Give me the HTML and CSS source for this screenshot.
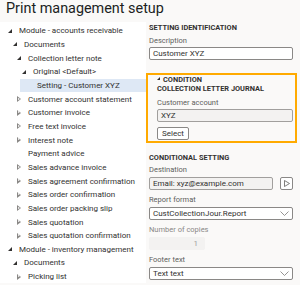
FILE: index.html
```html
<!DOCTYPE html>
<html lang="en">
<head>
<title>Print management setup</title>
<link rel="stylesheet" href="styles.css">
</head>
<body>
<h1 class="title">Print management setup</h1>
<div class="layout">
	<div class="tree">
		<div class="row l0"><span class="exp"></span>Module - accounts receivable</div>
		<div class="row l1"><span class="exp"></span>Documents</div>
		<div class="row l2"><span class="exp"></span>Collection letter note</div>
		<div class="row l3"><span class="exp"></span>Original &lt;Default&gt;</div>
		<div class="row selected">Setting - Customer XYZ</div>
		<div class="row l2"><span class="col"></span>Customer account statement</div>
		<div class="row l2"><span class="col"></span>Customer invoice</div>
		<div class="row l2"><span class="col"></span>Free text invoice</div>
		<div class="row l2"><span class="col"></span>Interest note</div>
		<div class="row l2"><span class="leaf"></span>Payment advice</div>
		<div class="row l2"><span class="col"></span>Sales advance invoice</div>
		<div class="row l2"><span class="col"></span>Sales agreement confirmation</div>
		<div class="row l2"><span class="col"></span>Sales order confirmation</div>
		<div class="row l2"><span class="col"></span>Sales order packing slip</div>
		<div class="row l2"><span class="col"></span>Sales quotation</div>
		<div class="row l2"><span class="col"></span>Sales quotation confirmation</div>
		<div class="row l0"><span class="exp"></span>Module - inventory management</div>
		<div class="row l1"><span class="exp"></span>Documents</div>
		<div class="row l2"><span class="col"></span>Picking list</div>
	</div>
	<div class="panel">
		<div class="section">SETTING IDENTIFICATION</div>
		<div class="label">Description</div>
		<div class="field">Customer XYZ</div>

		<div class="condition">
			<div class="section"><span class="exp small"></span>CONDITION</div>
			<div class="section">COLLECTION LETTER JOURNAL</div>
			<div class="label">Customer account</div>
			<div class="field readonly">XYZ</div>
			<div class="button">Select</div>
		</div>

		<div class="section">CONDITIONAL SETTING</div>
		<div class="label">Destination</div>
		<div class="inline">
			<div class="field readonly grow">Email: xyz@example.com</div>
			<div class="icon-btn"><svg width="6" height="7" viewBox="0 0 6 7"><path d="M0.5 0.5 L5.5 3.5 L0.5 6.5 Z" fill="none" stroke="#605e5c" stroke-width="0.8"/></svg></div>
		</div>
		<div class="label">Report format</div>
		<div class="field select">CustCollectionJour.Report<svg class="chev" width="9" height="5" viewBox="0 0 9 5"><path d="M0.5 0.5 L4.5 4.5 L8.5 0.5" fill="none" stroke="#8a8886" stroke-width="0.9"/></svg></div>
		<div class="label disabled">Number of copies</div>
		<div class="field copies">1</div>
		<div class="label">Footer text</div>
		<div class="field select">Text text<svg class="chev" width="9" height="5" viewBox="0 0 9 5"><path d="M0.5 0.5 L4.5 4.5 L8.5 0.5" fill="none" stroke="#8a8886" stroke-width="0.9"/></svg></div>
	</div>
</div>
</body>
</html>
```
FILE: styles.css
```css
body {
	margin: 0;
	background: #faf9f8;
	font-family: Roboto, "Noto Sans", sans-serif;
	color: #323130;
	overflow: hidden;
}
.title {
	margin: 0 0 5px 0;
	padding: 0 0 0 6px;
	height: 17px;
	font-size: 14.4px;
	font-weight: normal;
	color: #201f1e;
	line-height: 17px;
}
.layout {
	display: flex;
}
.tree {
	width: 146px;
	padding-top: 2px;
	background: #fff;
	flex: none;
}
.row {
	display: flex;
	align-items: center;
	height: 13.67px;
	font-size: 8px;
	white-space: nowrap;
}
.row.l0 { padding-left: 7px; }
.row.l1 { padding-left: 12px; }
.row.l2 { padding-left: 16px; }
.row.l3 { padding-left: 21px; }
.row.selected {
	margin-left: 20px;
	padding-left: 17px;
	background: #dee8f5;
}
.exp, .col, .leaf {
	display: inline-block;
	width: 12px;
	height: 8px;
	flex: none;
	position: relative;
}
.exp::before {
	content: "";
	position: absolute;
	left: 1px;
	top: 2px;
	border-style: solid;
	border-width: 0 0 4px 4px;
	border-color: transparent transparent #323130 transparent;
}
.exp.small {
	width: 6px;
}
.exp.small::before {
	left: 0;
	top: 1px;
	border-width: 0 0 3px 3px;
}
.col::before {
	content: "";
	position: absolute;
	left: 1px;
	top: 1px;
	width: 0;
	height: 0;
	border-style: solid;
	border-width: 3px 0 3px 4px;
	border-color: transparent transparent transparent #8a8886;
}
.col::after {
	content: "";
	position: absolute;
	left: 1.8px;
	top: 2.4px;
	border-style: solid;
	border-width: 1.6px 0 1.6px 2px;
	border-color: transparent transparent transparent #fff;
}
.panel {
	flex: 1;
	padding: 1px 7px 0 3px;
	display: flex;
	flex-direction: column;
}
.section {
	font-size: 7.4px;
	font-weight: bold;
	color: #323130;
	height: 10px;
	line-height: 10px;
	display: flex;
	align-items: center;
}
.label {
	font-size: 7.5px;
	color: #605e5c;
	height: 10px;
	line-height: 10px;
	margin-top: 5.5px;
	margin-bottom: 1.5px;
}
.section + .label {
	margin-top: 2.5px;
}
.label.disabled {
	color: #8a8886;
}
.field {
	height: 13px;
	box-sizing: border-box;
	border: 1px solid #8a8886;
	border-radius: 2px;
	background: #fff;
	font-size: 8px;
	line-height: 11px;
	padding: 0 3px;
	white-space: nowrap;
	display: flex;
	align-items: center;
}
.field.readonly {
	background: #f3f2f1;
	border-color: #a19f9d;
}
.field.select {
	justify-content: space-between;
}
.chev {
	flex: none;
}
.field.copies {
	width: 56px;
	border-color: #f3f2f1;
	background: #f3f2f1;
	color: #a19f9d;
	justify-content: flex-end;
	padding-right: 6px;
}
.condition {
	margin: 13px -4px 0 -3px;
	border: 2px solid #ffaa00;
	padding: 0 2px 1px 9px;
	display: flex;
	flex-direction: column;
}
.condition .section:first-child {
	height: 9px;
}
.condition .label {
	margin-top: 4px;
	margin-bottom: 1px;
}
.button {
	align-self: flex-start;
	margin-top: 4.5px;
	height: 13px;
	box-sizing: border-box;
	border: 1px solid #8a8886;
	border-radius: 2px;
	background: #fff;
	font-size: 8px;
	padding: 0 4px;
	line-height: 11px;
}
.panel > .condition + .section {
	margin-top: 10px;
}
.inline {
	display: flex;
	gap: 7px;
}
.grow {
	flex: 1;
}
.icon-btn {
	width: 13px;
	height: 13px;
	box-sizing: border-box;
	border: 1px solid #8a8886;
	border-radius: 2px;
	background: #fff;
	display: flex;
	align-items: center;
	justify-content: center;
}
```
